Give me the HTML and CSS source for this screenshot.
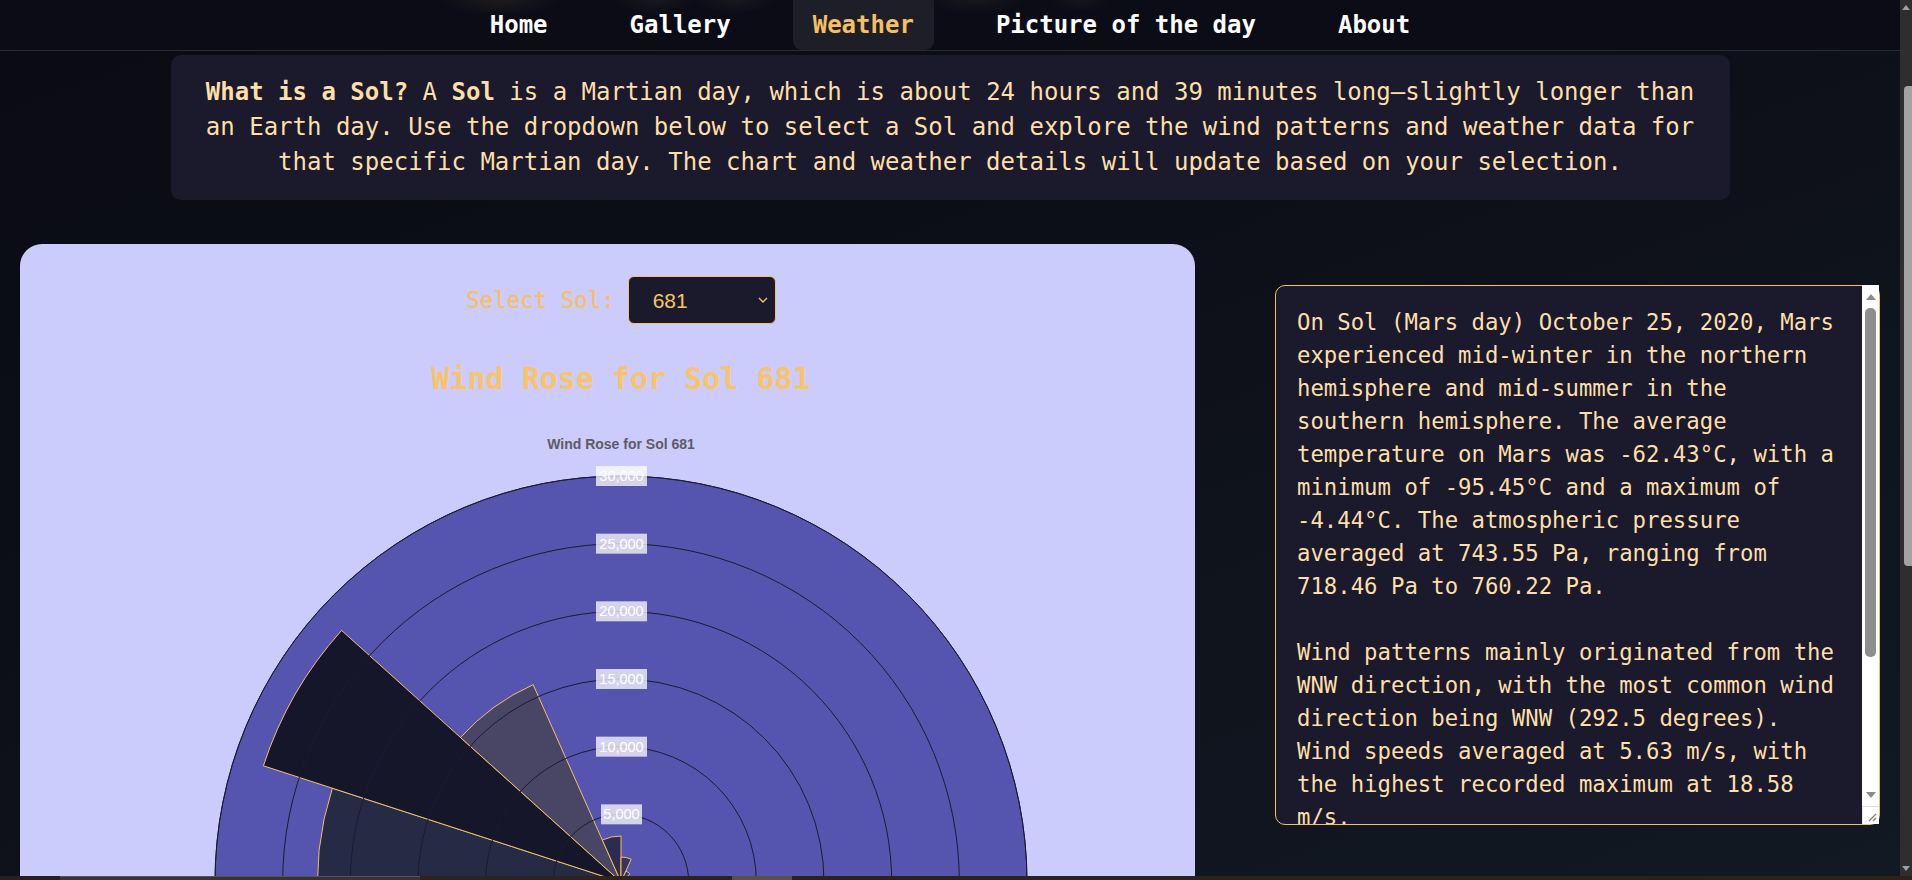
FILE: index.html
```html
<!DOCTYPE html>
<html lang="en">
<head>
<meta charset="utf-8">
<title>Mars Weather</title>
<link rel="stylesheet" href="styles.css">
</head>
<body>
<nav class="topnav">
  <a class="nav-link" href="#">Home</a>
  <a class="nav-link" href="#">Gallery</a>
  <a class="nav-link active" href="#">Weather</a>
  <a class="nav-link" href="#">Picture of the day</a>
  <a class="nav-link" href="#">About</a>
</nav>
<main class="page">
  <section class="intro">
    <p><strong>What is a Sol?</strong> A <strong>Sol</strong> is a Martian day, which is about 24 hours and 39 minutes long—slightly longer than an Earth day. Use the dropdown below to select a Sol and explore the wind patterns and weather data for that specific Martian day. The chart and weather details will update based on your selection.</p>
  </section>
  <div class="weather-row">
    <section class="chart-card">
      <div class="sol-picker">
        <label for="sol" class="sol-label">Select Sol:</label>
        <div class="select-wrap">
          <select id="sol" class="sol-select">
            <option selected>681</option>
            <option>682</option>
            <option>683</option>
          </select>
          <svg class="chevron" width="10" height="6" viewBox="0 0 10 6"><polyline points="1,1 5,5 9,1" fill="none" stroke="#f5c062" stroke-width="1.4"/></svg>
        </div>
      </div>
      <h2 class="chart-heading">Wind Rose for Sol 681</h2>
      <svg class="windrose" width="1148" height="720" viewBox="0 0 1148 720">
        <text x="574" y="39" class="plot-title" text-anchor="middle">Wind Rose for Sol 681</text>
        <circle cx="574" cy="472" r="406" fill="#5555af" stroke="#24244a" stroke-width="1"/>
        <g stroke="#f5c062" stroke-width="1" stroke-linejoin="miter">
          <path d="M574,472 L272.16,503.72 A303.5,303.5 0 0 1 285.35,378.21 Z" fill="#252b45"/>
          <path d="M574,472 L216.40,355.81 A376,376 0 0 1 294.58,220.41 Z" fill="#16162b"/>
          <path d="M574,472 L413.48,327.47 A216,216 0 0 1 486.14,274.67 Z" fill="#484664"/>
          <path d="M574,472 L555.29,429.98 A46,46 0 0 1 574,426 Z" fill="#2c2c4e"/>
          <path d="M574,472 L574,447 A25,25 0 0 1 584.17,449.16 Z" fill="#35355a"/>
          <path d="M574,472 L578.88,461.04 A12,12 0 0 1 582.92,463.97 Z" fill="#3a3a60"/>
        </g>
        <g fill="none" stroke="#1a1a30" stroke-width="1">
          <circle cx="574" cy="472" r="67.67"/>
          <circle cx="574" cy="472" r="135.33"/>
          <circle cx="574" cy="472" r="203"/>
          <circle cx="574" cy="472" r="270.67"/>
          <circle cx="574" cy="472" r="338.33"/>
          <circle cx="574" cy="472" r="406"/>
        </g>
        <g class="tick">
          <rect x="549" y="56" width="51" height="20"/><text x="574.5" y="71" text-anchor="middle">30,000</text>
          <rect x="549" y="123.67" width="51" height="20"/><text x="574.5" y="138.67" text-anchor="middle">25,000</text>
          <rect x="549" y="191.33" width="51" height="20"/><text x="574.5" y="206.33" text-anchor="middle">20,000</text>
          <rect x="549" y="259" width="51" height="20"/><text x="574.5" y="274" text-anchor="middle">15,000</text>
          <rect x="549" y="326.67" width="51" height="20"/><text x="574.5" y="341.67" text-anchor="middle">10,000</text>
          <rect x="554" y="394.33" width="41" height="20"/><text x="574.5" y="409.33" text-anchor="middle">5,000</text>
        </g>
      </svg>
    </section>
    <div class="details">
      <textarea class="weather-text" readonly>On Sol (Mars day) October 25, 2020, Mars experienced mid-winter in the northern hemisphere and mid-summer in the southern hemisphere. The average temperature on Mars was -62.43°C, with a minimum of -95.45°C and a maximum of -4.44°C. The atmospheric pressure averaged at 743.55 Pa, ranging from 718.46 Pa to 760.22 Pa.

Wind patterns mainly originated from the WNW direction, with the most common wind direction being WNW (292.5 degrees). Wind speeds averaged at 5.63 m/s, with the highest recorded maximum at 18.58 m/s.</textarea>
      <div class="ta-scrollbar" aria-hidden="true">
        <div class="ta-btn"><span class="tri-up"></span></div>
        <div class="ta-track"><div class="ta-thumb"></div></div>
        <div class="ta-btn"><span class="tri-down"></span></div>
        <div class="ta-resizer">
          <svg width="10" height="10" viewBox="0 0 10 10"><path d="M9 2 L2 9 M9 6 L6 9" stroke="#7a7a7a" stroke-width="1.2" fill="none"/></svg>
        </div>
      </div>
    </div>
  </div>
</main>
<div class="page-scrollbar" aria-hidden="true">
  <div class="ps-btn"><span class="ps-up"></span></div>
  <div class="ps-track"><div class="ps-thumb"></div></div>
  <div class="ps-btn"><span class="ps-down"></span></div>
</div>
<div class="bottom-strip" aria-hidden="true">
  <span class="strip-seg strip-a"></span>
  <span class="strip-seg strip-b"></span>
  <span class="strip-seg strip-c"></span>
  <span class="strip-seg strip-d"></span>
</div>
</body>
</html>
```

FILE: styles.css
```css
:root {
  color-scheme: dark;
}

* {
  box-sizing: border-box;
}

html,
body {
  margin: 0;
}

body {
  min-height: 100vh;
  padding-right: 12px;
  background: linear-gradient(160deg, #0a0b12 0%, #0d0f18 40%, #121923 100%);
  background-attachment: fixed;
  font-family: "DejaVu Sans Mono", "Liberation Mono", monospace;
  color: #fddfa8;
}

/* ---------- navigation ---------- */
.topnav {
  height: 51px;
  display: flex;
  justify-content: center;
  align-items: stretch;
  gap: 42px;
  border-bottom: 1px solid #272a33;
  background:
    radial-gradient(ellipse 60px 16px at 500px 0, rgba(120, 100, 80, 0.16), transparent),
    radial-gradient(ellipse 40px 14px at 655px 0, rgba(120, 110, 100, 0.12), transparent),
    radial-gradient(ellipse 40px 14px at 735px 0, rgba(120, 110, 100, 0.12), transparent),
    radial-gradient(ellipse 50px 14px at 975px 0, rgba(120, 100, 80, 0.12), transparent),
    radial-gradient(ellipse 30px 12px at 1080px 0, rgba(120, 100, 80, 0.1), transparent),
    #0b0c15;
}

.nav-link {
  display: flex;
  align-items: center;
  padding: 0 20px 1px;
  color: #ffffff;
  font-weight: bold;
  font-size: 24px;
  text-decoration: none;
  border-radius: 0 0 9px 9px;
}

.nav-link.active {
  background: #1e1e28;
  color: #f5c063;
}

/* ---------- intro ---------- */
.intro {
  width: 1559px;
  margin: 4px auto 0;
  padding: 20px 30px;
  background: #1a1a2c;
  border-radius: 10px;
  text-align: center;
  font-size: 24px;
  line-height: 35px;
  color: #fddfa8;
}

.intro p {
  margin: 0;
}

/* ---------- main row ---------- */
.weather-row {
  display: flex;
  align-items: flex-start;
  gap: 80px;
  margin-top: 44px;
  padding-left: 20px;
}

.chart-card {
  flex: none;
  width: 1175px;
  background: #ccccfc;
  border-radius: 22px;
  padding: 32px 0 30px 27px;
}

.sol-picker {
  display: flex;
  justify-content: center;
  align-items: center;
  gap: 13px;
}

.sol-label {
  font-size: 22.4px;
  color: #f5c062;
  -webkit-text-stroke: 0.3px #f5c062;
}

.select-wrap {
  position: relative;
}

.sol-select {
  appearance: none;
  -webkit-appearance: none;
  width: 148px;
  height: 48px;
  padding: 0 0 0 24px;
  background: #1a1a2c;
  color: #f8c467;
  border: 1px solid #f5c062;
  border-radius: 6px;
  font-family: "Liberation Sans", Arial, sans-serif;
  font-size: 21px;
}

.chevron {
  position: absolute;
  right: 8px;
  top: 21px;
  pointer-events: none;
}

.chart-heading {
  margin: 37px 0 13px;
  text-align: center;
  font-size: 30px;
  line-height: 36px;
  font-weight: bold;
  color: #f8c467;
}

.windrose {
  display: block;
}

.plot-title {
  font-family: "Liberation Sans", Arial, sans-serif;
  font-size: 14px;
  font-weight: bold;
  fill: #5c5c66;
}

.tick rect {
  fill: rgba(255, 255, 255, 0.74);
}

.tick text {
  font-family: "Liberation Sans", Arial, sans-serif;
  font-size: 14.5px;
  fill: #ffffff;
}

/* ---------- weather details ---------- */
.details {
  position: relative;
  flex: none;
  width: 605px;
  height: 540px;
  margin-top: 41px;
}

.weather-text {
  display: block;
  width: 100%;
  height: 100%;
  padding: 20px 43px 20px 21px;
  background: #1a1a2c;
  color: #fddfa8;
  border: 1px solid #f5c062;
  border-radius: 10px;
  font-family: "DejaVu Sans Mono", "Liberation Mono", monospace;
  font-size: 22.3px;
  line-height: 33px;
  outline: none;
  resize: none;
  overflow: hidden;
}

.ta-scrollbar {
  position: absolute;
  top: 0;
  right: 1px;
  bottom: 1px;
  width: 17px;
  display: flex;
  flex-direction: column;
  background: #ffffff;
}

.ta-btn {
  height: 23px;
  display: flex;
  align-items: center;
  justify-content: center;
}

.tri-up,
.tri-down {
  width: 0;
  height: 0;
  border-left: 5px solid transparent;
  border-right: 5px solid transparent;
}

.tri-up {
  border-bottom: 6px solid #8a8a8a;
}

.tri-down {
  border-top: 6px solid #8a8a8a;
}

.ta-track {
  flex: 1;
  padding: 0 3px;
}

.ta-thumb {
  height: 349px;
  border-radius: 5px;
  background: #8e8e8e;
}

.ta-resizer {
  height: 18px;
  border-top: 1px solid #dcdcdc;
  border-left: 1px solid #e6e6e6;
  display: flex;
  align-items: flex-end;
  justify-content: flex-end;
  padding: 0 2px 2px 0;
}

/* ---------- page scrollbar ---------- */
.page-scrollbar {
  position: fixed;
  top: 0;
  right: 0;
  bottom: 4px;
  width: 12px;
  display: flex;
  flex-direction: column;
  background: #2e2e2e;
}

.ps-btn {
  height: 15px;
  display: flex;
  align-items: center;
  justify-content: center;
}

.ps-up,
.ps-down {
  width: 0;
  height: 0;
  border-left: 4px solid transparent;
  border-right: 4px solid transparent;
}

.ps-up {
  border-bottom: 5px solid #a0a0a0;
}

.ps-down {
  border-top: 5px solid #a0a0a0;
}

.ps-track {
  flex: 1;
  padding: 71px 0 0 4px;
}

.ps-thumb {
  height: 480px;
  border-radius: 4px 0 0 4px;
  background: #a3a3a3;
}

/* ---------- bottom edge strip ---------- */
.bottom-strip {
  position: fixed;
  left: 0;
  right: 0;
  bottom: 0;
  height: 4px;
  display: flex;
  background: #2a221b;
}

.strip-seg {
  display: block;
  height: 100%;
}

.strip-a {
  width: 60px;
  background: #24211e;
}

.strip-b {
  width: 360px;
  background: #343434;
  border-top: 1px solid #555;
}

.strip-c {
  width: 312px;
  background: #2c241c;
}

.strip-d {
  width: 60px;
  background: #5a5048;
}
```
